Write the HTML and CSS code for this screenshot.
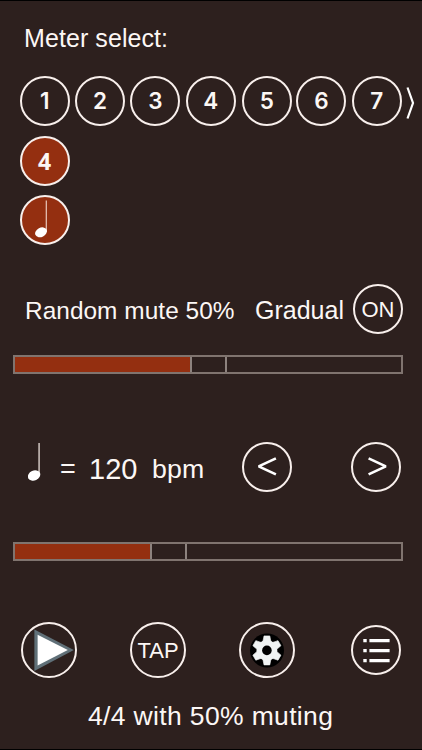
FILE: index.html
```
<!DOCTYPE html>
<html lang="en">
<head>
<meta charset="utf-8">
<title>Metronome</title>
<link rel="stylesheet" href="styles.css">
</head>
<body>
<main class="app">
  <h1 class="title">Meter select:</h1>
  <div class="meters">
    <button class="circle num">1</button>
    <button class="circle num">2</button>
    <button class="circle num">3</button>
    <button class="circle num">4</button>
    <button class="circle num five">5</button>
    <button class="circle num">6</button>
    <button class="circle num">7</button>
    <svg class="more" viewBox="0 0 9 32"><path d="M1.5 .5L7 16L1.5 31.5" fill="none" stroke="#fff" stroke-width="2.2"/></svg>
  </div>
  <button class="circle active beats">4</button>
  <button class="circle active unit">
    <svg class="note-small" viewBox="0 0 14 38"><path d="M11.3 .5V32" stroke="#e9c9bd" stroke-width="1.2"/><ellipse cx="6" cy="32.3" rx="6.2" ry="4.6" transform="rotate(-27 6 32.3)" fill="#fff"/></svg>
  </button>

  <div class="mute">
    <span class="mute-label">Random mute 50%</span>
    <span class="gradual">Gradual</span>
    <button class="circle on">ON</button>
  </div>
  <div class="slider mute-slider"><div class="fill"></div><div class="thumb"></div></div>

  <div class="tempo">
    <svg class="note" viewBox="0 0 14 40"><path d="M11.1 1V34" stroke="#b5aaa6" stroke-width="1.8"/><ellipse cx="6.1" cy="33.5" rx="6.4" ry="5" transform="rotate(-25 6.1 33.5)" fill="#fff"/></svg>
    <span class="equals">=</span>
    <span class="bpm">120</span>
    <span class="bpm-label">bpm</span>
    <button class="circle less"><svg viewBox="0 0 50 50"><path d="M33.9 16.4L16.7 24.4L33.9 32.4" fill="none" stroke="#fff" stroke-width="2.7" stroke-linejoin="bevel"/></svg></button>
    <button class="circle greater"><svg viewBox="0 0 50 50"><path d="M17.6 16.4L34.8 24.4L17.6 32.4" fill="none" stroke="#fff" stroke-width="2.7" stroke-linejoin="bevel"/></svg></button>
  </div>
  <div class="slider tempo-slider"><div class="fill"></div><div class="thumb"></div></div>

  <div class="controls">
    <button class="circle large"><svg viewBox="0 0 56 56"><path d="M13.4 7.4L52.8 28L13.4 49Z" fill="#607078"/><path d="M16.6 12.8L46.8 28L16.6 43.6Z" fill="#fff"/></svg></button>
    <button class="circle large tap">TAP</button>
    <button class="circle large gear"><svg viewBox="0 0 56 56">
      <circle cx="28" cy="28.5" r="17" fill="#000"/>
      <g transform="translate(27.9 28.4)" fill="#f1f4f4">
        <circle r="10.4"/>
        <path id="tooth" d="M-4 -9L-2.9 -14.5H2.9L4 -9Z" stroke="#f1f4f4" stroke-width=".6" stroke-linejoin="round"/>
        <use href="#tooth" transform="rotate(60)"/><use href="#tooth" transform="rotate(120)"/><use href="#tooth" transform="rotate(180)"/><use href="#tooth" transform="rotate(240)"/><use href="#tooth" transform="rotate(300)"/>
        <circle r="4.8" fill="#000"/>
      </g>
    </svg></button>
    <button class="circle list"><svg viewBox="0 0 50 50"><path d="M12.3 15.6h3.4M12.3 25.6h3.4M12.3 35.6h3.4M18.4 15.6h20.2M18.4 25.6h20.2M18.4 35.6h20.2" stroke="#fff" stroke-width="3.4"/></svg></button>
  </div>
  <p class="status">4/4 with 50% muting</p>
</main>
</body>
</html>
```
FILE: styles.css
```
* { box-sizing: border-box; }
body { margin: 0; background: #000; }
.app {
  display: flex;
  flex-direction: column;
  align-items: flex-start;
  width: 422px;
  height: 750px;
  overflow: hidden;
  border-top: 1px solid #000;
  border-bottom: 1px solid #000;
  background: #2d201e;
  color: #fcf7f5;
  font-family: "Liberation Sans", Arial, sans-serif;
  white-space: nowrap;
}
.title {
  margin: 22px 0 0 24px;
  font-size: 25px;
  font-weight: 400;
  line-height: 30px;
  letter-spacing: .08px;
}
.circle {
  display: flex;
  flex: none;
  align-items: center;
  justify-content: center;
  width: 50px;
  height: 50px;
  padding: 0;
  border: 2px solid #f8efec;
  border-radius: 50%;
  background: transparent;
  color: #fcf7f5;
  font: 22px/1 "Liberation Sans", Arial, sans-serif;
}
.circle svg { display: block; flex: none; width: 50px; height: 50px; }
.meters {
  display: flex;
  gap: 5.35px;
  align-items: center;
  height: 50px;
  margin: 22.7px 0 0 19.7px;
}
.num { padding-top: 2px; font: 600 22.5px/1 Inter, sans-serif; }
.five { margin: 0 -.8px 0 .8px; }
.more { flex: none; width: 9px; height: 32px; margin-top: 4px; margin-left: -1px; }
.active { margin-left: 19.7px; background: #942f10; }
.beats { margin-top: 10.6px; font: 700 23px/1 "Open Sans", sans-serif; }
.unit { margin-top: 9px; }
.circle .note-small { width: 14px; height: 38px; margin: -2px 0 0 -5px; }

.mute { display: flex; align-items: center; height: 50px; margin: 38.7px 0 0 25px; }
.mute-label { width: 230px; margin-top: 4px; font-size: 24.4px; letter-spacing: .05px; }
.gradual { width: 98px; margin-top: 3px; font-size: 25px; }
.on { padding-top: 2px; font-size: 22px; }
.slider {
  display: flex;
  width: 390px;
  height: 19px;
  margin-left: 13px;
  border: 2px solid #80746f;
}
.fill { background: #942f10; }
.thumb { width: 37px; border: solid #8d827e; border-width: 0 2px; }
.mute-slider { margin-top: 21px; }
.mute-slider .fill { width: 175px; }
.tempo-slider { margin-top: 50px; }
.tempo-slider .fill { width: 135px; }

.tempo { display: flex; align-items: center; height: 50px; margin: 68px 0 0 28px; }
.note { width: 14px; height: 40px; margin: -9px 18px 0 0; }
.equals { width: 29px; margin-top: 5px; font-size: 27px; }
.bpm { width: 63px; margin-top: 5px; font-size: 29px; }
.bpm-label { width: 90px; margin-top: 5px; font-size: 26.7px; letter-spacing: .2px; }
.greater { margin-left: 59px; }

.controls { display: flex; align-items: center; height: 56px; margin: 61px 0 0 20.5px; }
.large { width: 56px; height: 56px; margin-right: 53.5px; }
.large svg { width: 56px; height: 56px; }
.tap { padding-top: 3px; font-size: 22px; }
.gear { margin: 0 54px 0 -.5px; }
.list { margin-left: 2px; }
.status {
  margin: 23px 0 0 88px;
  font-size: 26.5px;
  line-height: 30px;
  letter-spacing: .35px;
}
```
